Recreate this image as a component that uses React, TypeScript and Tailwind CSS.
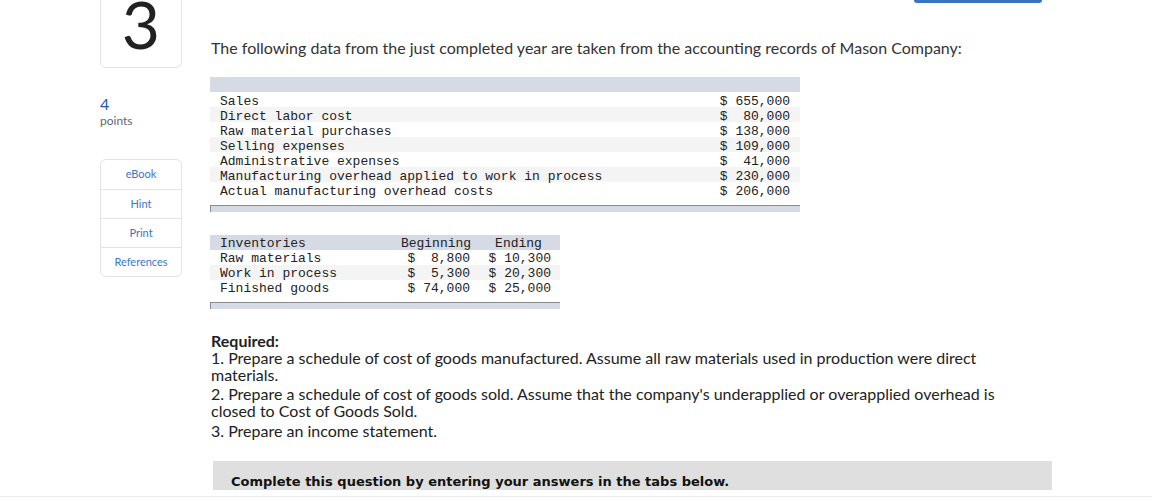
import React from "react";

const sans = "font-['Lato','Liberation_Sans',sans-serif]";
const mono = "font-['Liberation_Mono','Courier_New',monospace]";

const dataRows: [string, string][] = [
  ["Sales", "$ 655,000"],
  ["Direct labor cost", "$  80,000"],
  ["Raw material purchases", "$ 138,000"],
  ["Selling expenses", "$ 109,000"],
  ["Administrative expenses", "$  41,000"],
  ["Manufacturing overhead applied to work in process", "$ 230,000"],
  ["Actual manufacturing overhead costs", "$ 206,000"],
];

const inventories: [string, string, string][] = [
  ["Raw materials", "$  8,800", "$ 10,300"],
  ["Work in process", "$  5,300", "$ 20,300"],
  ["Finished goods", "$ 74,000", "$ 25,000"],
];

const tools = ["eBook", "Hint", "Print", "References"];

const Footer: React.FC = () => (
  <div className="h-[7px] bg-[#d5dae5] border-t border-l border-[#8c8c8c]" />
);

export default function App() {
  return (
    <div className={`flex flex-col h-[501px] bg-white text-[#333] ${sans}`}>
      <div className="flex-1 overflow-hidden">
        <div className="flex">
          {/* left rail */}
          <div className="ml-[100px] w-[82px] flex flex-col">
            <div className="-mt-[20px] h-[88px] border border-[#e3e3e3] rounded-b-md flex items-end justify-center">
              <span className="text-[66px] leading-none pb-[10px] text-[#222]">3</span>
            </div>
            <div className="mt-[27px] text-[16px] leading-[18px] text-[#1f5aa0]">4</div>
            <div className="text-[12px] leading-[16px] text-[#666]">points</div>
            <div className="mt-[30px] border border-[#e3e3e3] rounded-md flex flex-col text-[11px] text-[#3a78c3]">
              {tools.map((t, i) => (
                <div
                  key={t}
                  className={`h-[29px] flex items-center justify-center ${i > 0 ? "border-t border-[#e3e3e3]" : ""}`}
                >
                  {t}
                </div>
              ))}
            </div>
          </div>

          {/* main column */}
          <div className="ml-[29px] w-[841px] flex flex-col">
            <div className="flex justify-end pr-[10px]">
              <div className="h-[3px] w-[128px] bg-[#3575c2] rounded-b-[3px]" />
            </div>
            <p className="mt-[35px] text-[16px] leading-[20px]">
              The following data from the just completed year are taken from the accounting records of Mason Company:
            </p>

            {/* first table */}
            <div className={`mt-[19px] -ml-[1px] w-[590px] text-[13px] leading-[15px] text-[#222] ${mono}`}>
              <div className="h-[15px] bg-[#d5dae5]" />
              {dataRows.map(([label, value], i) => (
                <div
                  key={label}
                  className={`h-[15px] pt-[2px] flex justify-between px-[10px] whitespace-pre ${i % 2 === 1 ? "bg-[#f4f4f4]" : ""}`}
                >
                  <span>{label}</span>
                  <span>{value}</span>
                </div>
              ))}
              <div className="h-[8px]" />
              <Footer />
            </div>

            {/* inventories table */}
            <div className={`mt-[23px] -ml-[1px] w-[350px] text-[13px] leading-[15px] text-[#222] ${mono}`}>
              <div className="h-[15px] pt-[1px] grid grid-cols-[185px_82px_83px] bg-[#d5dae5]">
                <span className="pl-[10px]">Inventories</span>
                <span className="text-center">Beginning</span>
                <span className="text-center">Ending</span>
              </div>
              {inventories.map(([label, b, e], i) => (
                <div
                  key={label}
                  className={`h-[15px] pt-[1px] grid grid-cols-[185px_82px_83px] whitespace-pre ${i === 1 ? "bg-[#f4f4f4]" : ""}`}
                >
                  <span className="pl-[10px]">{label}</span>
                  <span className="text-right pr-[7px]">{b}</span>
                  <span className="text-right pr-[9px]">{e}</span>
                </div>
              ))}
              <div className="h-[7px]" />
              <Footer />
            </div>

            {/* required */}
            <div className="mt-[23px] text-[16px] leading-[17px] text-[#222] w-[800px]">
              <p className="font-bold">Required:</p>
              <p>
                1. Prepare a schedule of cost of goods manufactured. Assume all raw materials used in production were direct materials.
              </p>
              <p className="mt-[2px]">
                2. Prepare a schedule of cost of goods sold. Assume that the company's underapplied or overapplied overhead is closed to Cost of Goods Sold.
              </p>
              <p className="mt-[3px]">3. Prepare an income statement.</p>
            </div>

            <div className="mt-[22px] ml-[2px] h-[29px] overflow-hidden bg-[#dfdfdf] pl-[18px] pt-[14px]">
              <p className="font-['DejaVu_Sans','Verdana',sans-serif] font-bold text-[13px] leading-[16px] text-[#111] -mt-[1px]">
                Complete this question by entering your answers in the tabs below.
              </p>
            </div>
          </div>
        </div>
      </div>
      <div className="h-px bg-[#ececec]" />
      <div className="h-[4px]" />
    </div>
  );
}
